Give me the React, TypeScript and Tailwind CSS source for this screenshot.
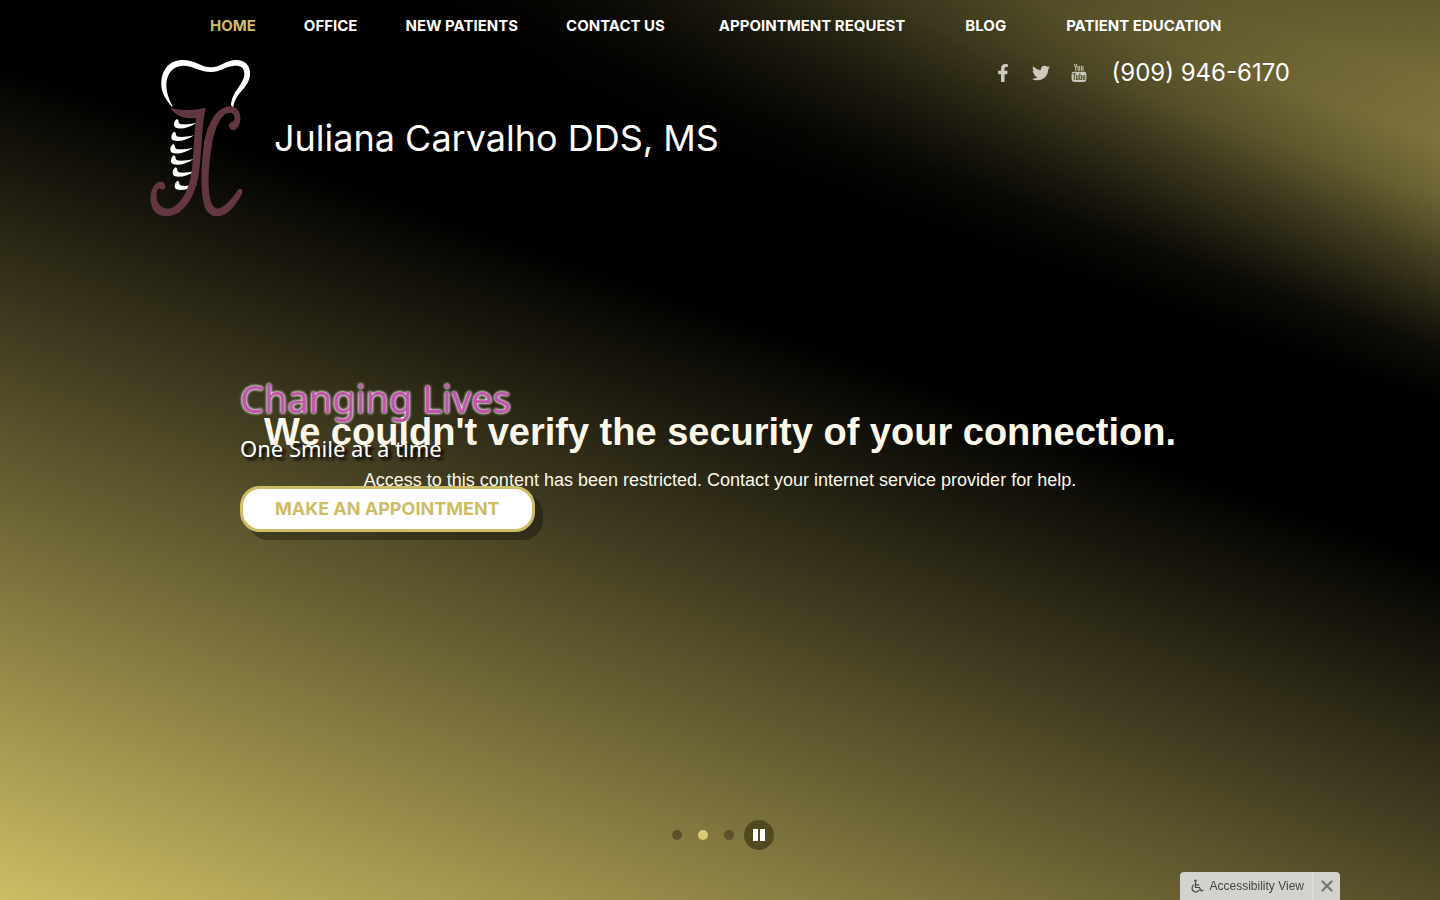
import React, { useState } from 'react';
import { FaFacebookF, FaTwitter } from 'react-icons/fa';
import { TfiYoutube } from 'react-icons/tfi';
import { X } from 'lucide-react';

const NAV_ITEMS = [
  { label: 'HOME', className: 'px-6 text-[#cdbd66]' },
  { label: 'OFFICE', className: 'px-6 text-white' },
  { label: 'NEW PATIENTS', className: 'px-6 text-white' },
  { label: 'CONTACT US', className: 'px-6 text-white' },
  { label: 'APPOINTMENT REQUEST', className: 'px-[30px] text-white' },
  { label: 'BLOG', className: 'px-[30px] text-white' },
  { label: 'PATIENT EDUCATION', className: 'px-[30px] text-white' },
];

const SOCIALS = [
  { label: 'Facebook', Icon: FaFacebookF },
  { label: 'Twitter', Icon: FaTwitter },
  { label: 'YouTube', Icon: TfiYoutube },
];

// upper left corner of every implant thread
const THREADS = [
  [112, 207],
  [104, 245],
  [101, 282],
  [103, 316],
  [108, 352],
  [114, 392],
];

function Logo() {
  return (
    <svg viewBox="30 27 300 474" className="h-[158px] w-[100px] shrink-0" aria-hidden="true">
      <path
        fill="#fff"
        d="M96 171C76 148 62 124 64 98C66 58 88 30 128 30C166 30 184 52 212 52C244 52 254 30 290 30C318 30 332 50 330 76C326 116 286 126 280 173L273 166C276 122 312 104 313 72C313 50 298 46 280 48C254 51 242 66 212 66C178 66 160 47 130 47C98 47 80 72 79 104C79 130 88 148 97 168Z"
      />
      {THREADS.map(([x, y]) => (
        <path
          key={y}
          fill="#fff"
          transform={`translate(${x} ${y})`}
          d="M-1 0C-10 5 -14 20 -5 26C10 32 36 26 58 11C38 15 14 18 7 14C2 10 6 3 -1 0Z"
        />
      ))}
      <path
        fill="#623740"
        d="M91 174C122 182 160 182 197 173C186 222 185 300 179 352C173 408 156 458 118 487C88 504 54 504 39 478C26 452 30 410 54 397C66 392 78 400 76 412C74 422 62 420 58 415C46 420 47 448 57 463C69 480 92 480 109 465C138 440 151 402 157 346C162 296 163 242 168 203C146 209 110 203 91 174Z"
      />
      <path
        fill="#623740"
        d="M274 239C260 228 268 214 277 217C288 211 285 189 270 188C245 187 226 228 216 282C206 340 202 404 210 444C216 477 234 483 254 466C272 450 284 436 294 419C302 413 309 418 307 428C294 456 276 478 260 490C236 506 207 501 195 473C183 434 181 376 189 306C195 238 221 176 266 169C293 167 305 190 300 215C297 233 284 243 274 239Z"
      />
    </svg>
  );
}

function WheelchairIcon() {
  return (
    <svg
      viewBox="0 0 14 14"
      className="size-3.5"
      fill="none"
      stroke="currentColor"
      strokeWidth="1.2"
      strokeLinecap="round"
      strokeLinejoin="round"
      aria-hidden="true"
    >
      <circle cx="5.5" cy="1.8" r="1.3" fill="currentColor" stroke="none" />
      <path d="M5.5 3.5V8.5H9.5L11.2 12L13 11.2M5.5 5.8H8.8" />
      <path d="M3.8 6A3.8 3.8 0 1 0 9.3 10.8" />
    </svg>
  );
}

function Header() {
  return (
    <header className="relative mx-auto w-full max-w-[1140px]">
      <nav aria-label="Main">
        <ul className="flex flex-wrap pt-3.5 pr-0 pb-[15px] pl-9 text-[15px] leading-6 font-bold">
          {NAV_ITEMS.map((item) => (
            <li key={item.label} className={item.className}>
              <a href="#">{item.label}</a>
            </li>
          ))}
        </ul>
      </nav>
      <div className="mt-1.5 flex items-start justify-between">
        <div className="flex items-center gap-6">
          <Logo />
          <p className="text-[36px] leading-12 text-white">Juliana Carvalho DDS, MS</p>
        </div>
        <div className="flex items-center gap-6">
          <ul className="flex items-center gap-5 text-[18px] text-[#ccc9bd]">
            {SOCIALS.map(({ label, Icon }) => (
              <li key={label}>
                <a href="#" aria-label={label}>
                  <Icon />
                </a>
              </li>
            ))}
          </ul>
          <a href="tel:9099466170" className="text-[24px] leading-7 text-white">
            (909) 946-6170
          </a>
        </div>
      </div>
    </header>
  );
}

export default function App() {
  const [slide, setSlide] = useState(1);
  const [paused, setPaused] = useState(false);
  const [showAccess, setShowAccess] = useState(true);

  return (
    <div className="relative flex min-h-screen flex-col overflow-hidden bg-[linear-gradient(199deg,#000_40%,#cdbd64)] font-[Inter,sans-serif]">
      <div className="absolute inset-0 bg-[linear-gradient(199deg,#80763dc0_0%,#80763dee_6%,#80763dfa_10%,#80763dd8_14%,#80763d80_19%,#80763d1c_25%,#80763d00_29%)] [mask-image:linear-gradient(to_left,#000,#000000d4_14%,#0000009e_30%,#00000066_48%,#00000020_64%,transparent_76%)]" />

      <div className="absolute inset-0 flex flex-col items-center justify-center gap-3 font-['Liberation_Sans',sans-serif] text-[#fbf8ea]">
        <h1 className="text-[38px] leading-12 font-bold">We couldn't verify the security of your connection.</h1>
        <p className="text-[18px] leading-6">
          Access to this content has been restricted. Contact your internet service provider for help.
        </p>
      </div>

      <Header />

      <main className="relative mx-auto mt-[157px] flex w-full max-w-[960px] flex-1 flex-col items-start font-['Noto_Sans',sans-serif]">
        <h2 className="text-[38px] leading-12 text-[#c055ab] [text-shadow:0_0_3px_#fff,0_0_3px_#fff]">Changing Lives</h2>
        <p className="mt-2.5 text-[22px] leading-8 text-white [text-shadow:3px_3px_3px_#000]">One Smile at a time</p>
        <a
          href="#"
          className="mt-5.5 rounded-[20px] border-3 border-[#cdbd66] bg-white px-8 py-2 font-[Inter,sans-serif] text-[18px] leading-6 font-bold text-[#cdbd66] shadow-[8px_8px_0_#0000004d]"
        >
          MAKE AN APPOINTMENT
        </a>
      </main>

      <div className="relative flex items-center justify-center gap-2.5 pb-[50px] pl-1.5">
        <div className="flex gap-4">
          {[0, 1, 2].map((i) => (
            <button
              key={i}
              type="button"
              aria-label={`Slide ${i + 1}`}
              onClick={() => setSlide(i)}
              className={i === slide ? 'size-2.5 rounded-full bg-[#d8ca74]' : 'size-2.5 rounded-full bg-[#5c5229]'}
            />
          ))}
        </div>
        <button
          type="button"
          aria-label={paused ? 'Play' : 'Pause'}
          onClick={() => setPaused(!paused)}
          className="flex size-[30px] items-center justify-center gap-0.5 rounded-full bg-[#514922]"
        >
          <span className="h-3 w-[5px] bg-white" />
          <span className="h-3 w-[5px] bg-white" />
        </button>
      </div>

      {showAccess && (
        <div className="fixed right-[100px] bottom-0 flex h-7 items-center rounded-t-sm bg-[#d2d3ce] font-['Liberation_Sans',sans-serif] text-[12px] text-[#444]">
          <a href="#" className="flex h-7 items-center gap-1.5 pr-2 pl-2.5">
            <WheelchairIcon />
            Accessibility View
          </a>
          <button
            type="button"
            aria-label="Close"
            onClick={() => setShowAccess(false)}
            className="flex h-7 w-7 items-center justify-center border-l border-[#dfe0db] text-[#777]"
          >
            <X size={18} strokeWidth={3} />
          </button>
        </div>
      )}
    </div>
  );
}
